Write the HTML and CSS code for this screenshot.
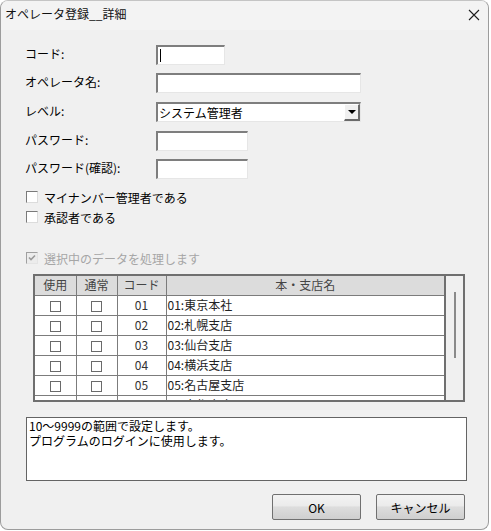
FILE: index.html
```html
<!DOCTYPE html>
<html lang="ja">
<head>
  <meta charset="UTF-8">
  <title>オペレータ登録__詳細</title>
  <link rel="stylesheet" href="styles.css">
</head>
<body>
  <div class="window">
    <div class="titlebar">
      <span class="title">オペレータ登録__詳細</span>
      <svg class="close" width="12" height="12" viewBox="0 0 12 12">
        <path d="M1 1 L11 11 M11 1 L1 11" stroke="#1c1c1c" stroke-width="1.1" fill="none"/>
      </svg>
    </div>

    <div class="content">
      <!-- Operator fields -->
      <div class="fields">
        <div class="field">
          <span class="label">コード:</span>
          <div class="edit w-code"><span class="caret"></span></div>
        </div>
        <div class="field">
          <span class="label">オペレータ名:</span>
          <div class="edit w-long"></div>
        </div>
        <div class="field field-select">
          <span class="label">レベル:</span>
          <div class="edit w-long select">
            <span class="select-text">システム管理者</span>
            <span class="drop-btn"><span class="arrow"></span></span>
          </div>
        </div>
        <div class="field">
          <span class="label">パスワード:</span>
          <div class="edit w-mid"></div>
        </div>
        <div class="field">
          <span class="label">パスワード(確認):</span>
          <div class="edit w-mid"></div>
        </div>
      </div>

      <div class="checks">
        <div class="check"><span class="box"></span>マイナンバー管理者である</div>
        <div class="check"><span class="box"></span>承認者である</div>
      </div>

      <div class="check check-disabled">
        <span class="box box-checked">
          <svg width="10" height="10" viewBox="0 0 10 10">
            <path d="M2 4.5 L4 6.5 L8 2.5" stroke="#9a9a9a" stroke-width="1.6" fill="none"/>
          </svg>
        </span>選択中のデータを処理します
      </div>

      <!-- Branch grid -->
      <div class="grid-box">
        <div class="grid-view">
          <table class="grid">
            <thead>
              <tr><th class="c-use">使用</th><th class="c-norm">通常</th><th class="c-code">コード</th><th>本・支店名</th></tr>
            </thead>
            <tbody>
              <tr><td><span class="cell-box"></span></td><td><span class="cell-box"></span></td><td class="code">01</td><td class="name">01:東京本社</td></tr>
              <tr><td><span class="cell-box"></span></td><td><span class="cell-box"></span></td><td class="code">02</td><td class="name">02:札幌支店</td></tr>
              <tr><td><span class="cell-box"></span></td><td><span class="cell-box"></span></td><td class="code">03</td><td class="name">03:仙台支店</td></tr>
              <tr><td><span class="cell-box"></span></td><td><span class="cell-box"></span></td><td class="code">04</td><td class="name">04:横浜支店</td></tr>
              <tr><td><span class="cell-box"></span></td><td><span class="cell-box"></span></td><td class="code">05</td><td class="name">05:名古屋支店</td></tr>
              <tr><td><span class="cell-box"></span></td><td><span class="cell-box"></span></td><td class="code">06</td><td class="name">06:京都支店</td></tr>
            </tbody>
          </table>
        </div>
        <div class="vscroll"><div class="thumb"></div></div>
      </div>

      <div class="memo">10〜9999の範囲で設定します。<br>プログラムのログインに使用します。</div>

      <div class="buttons">
        <button class="btn">OK</button>
        <button class="btn">キャンセル</button>
      </div>
    </div>
  </div>
</body>
</html>
```

FILE: styles.css
```css
/**
 * Base.
 */
* {
  box-sizing: border-box;
}
body {
  margin: 0;
  background: #ffffff;
  font-family: "Noto Sans CJK JP", "Noto Sans", sans-serif;
  font-size: 12px;
  color: #000;
}

/**
 * Window frame.
 */
.window {
  width: 489px;
  height: 530px;
  border: 1px solid #9c9c9c;
  border-top-color: #c4c4c4;
  border-radius: 8px;
  background: #f0f0f0;
  overflow: hidden;
}
.titlebar {
  display: flex;
  align-items: flex-start;
  justify-content: space-between;
  height: 29px;
  background: #f3f3f3;
}
.title {
  padding: 5px 0 0 4px;
  font-size: 12px;
  line-height: 16px;
  color: #111;
}
.close {
  margin: 8px 8px 0 0;
}

.content {
  padding: 15px 23px 0 24px;
}

/**
 * Fields.
 */
.fields {
  display: flex;
  flex-direction: column;
  gap: 8px;
}
.field {
  display: flex;
  align-items: center;
  height: 20px;
}
.field-select {
  margin: 1px 0;
}
.label {
  width: 131px;
  line-height: 14px;
  padding-bottom: 2px;
}
.edit {
  position: relative;
  height: 20px;
  background: #fff;
  border-style: solid;
  border-width: 2px 1px 1px 2px;
  border-color: #7e7e7e #e6e6e6 #e6e6e6 #7e7e7e;
}
.w-code {
  width: 69px;
}
.w-long {
  width: 205px;
}
.w-mid {
  width: 92px;
}
.caret {
  position: absolute;
  left: 2px;
  top: 2px;
  width: 1px;
  height: 13px;
  background: #000;
}
.select {
  display: flex;
  align-items: center;
  justify-content: space-between;
}
.select-text {
  padding-left: 1px;
  line-height: 14px;
}
.drop-btn {
  display: flex;
  align-items: center;
  justify-content: center;
  width: 16px;
  height: 17px;
  background: #f0f0f0;
  border-style: solid;
  border-width: 1px 2px 2px 1px;
  border-color: #fff #6a6a6a #6a6a6a #fff;
}
.arrow {
  width: 0;
  height: 0;
  border-left: 4px solid transparent;
  border-right: 4px solid transparent;
  border-top: 4px solid #000;
}

/**
 * Check boxes.
 */
.checks {
  display: flex;
  flex-direction: column;
  gap: 4px;
  margin-top: 10px;
}
.check {
  display: flex;
  align-items: center;
  gap: 6px;
  height: 16px;
  padding-left: 1px;
}
.box {
  display: flex;
  align-items: center;
  justify-content: center;
  width: 12px;
  height: 12px;
  background: #fff;
  border-style: solid;
  border-width: 1px;
  border-color: #7a7a7a #dcdcdc #dcdcdc #7a7a7a;
}
.check-disabled {
  margin-top: 25px;
  color: #a6a6a6;
}
.box-checked {
  background: #ececec;
  border-color: #a0a0a0 #e4e4e4 #e4e4e4 #a0a0a0;
}

/**
 * Grid.
 */
.grid-box {
  display: flex;
  width: 432px;
  height: 128px;
  margin: 8px 0 0 8px;
  border: 2px solid #6f6f6f;
}
.grid-view {
  flex: 1;
  overflow: hidden;
  background: #fff;
  border-right: 2px solid #6f6f6f;
}
.grid {
  width: 100%;
  border-collapse: collapse;
  table-layout: fixed;
}
.grid th,
.grid td {
  height: 20px;
  padding: 0;
  border: 1px solid #7c7c7c;
  font-weight: normal;
  line-height: 14px;
  text-align: center;
  color: #333;
}
.grid tr:first-child th {
  border-top: none;
}
.grid th:first-child,
.grid td:first-child {
  border-left: none;
}
.grid th:last-child,
.grid td:last-child {
  border-right: none;
}
.grid th {
  height: 19px;
  background: #dcdcdc;
  color: #444;
}
.c-use,
.c-norm {
  width: 41px;
}
.c-code {
  width: 49px;
}
.grid td.name {
  text-align: left;
  padding-left: 1px;
  color: #222;
}
.cell-box {
  display: inline-block;
  width: 11px;
  height: 11px;
  margin-top: 3px;
  border: 1px solid #6a6a6a;
  vertical-align: top;
}
.vscroll {
  display: flex;
  justify-content: center;
  width: 17px;
  padding-top: 16px;
  background: #f0f0f0;
}
.thumb {
  width: 2px;
  height: 66px;
  background: #8a8a8a;
}

/**
 * Memo and buttons.
 */
.memo {
  width: 441px;
  height: 64px;
  margin: 15px 0 0 1px;
  padding: 0 2px;
  background: #fff;
  border: 1px solid #646464;
  line-height: 15px;
  color: #000;
}
.buttons {
  display: flex;
  justify-content: flex-end;
  gap: 15px;
  margin-top: 13px;
}
.btn {
  width: 89px;
  height: 26px;
  padding: 0;
  font-family: inherit;
  font-size: 12px;
  color: #000;
  border: 1px solid #707070;
  border-radius: 2px;
  background: linear-gradient(#f3f3f3, #ebebeb 45%, #dddddd 50%, #cfcfcf);
}
```
